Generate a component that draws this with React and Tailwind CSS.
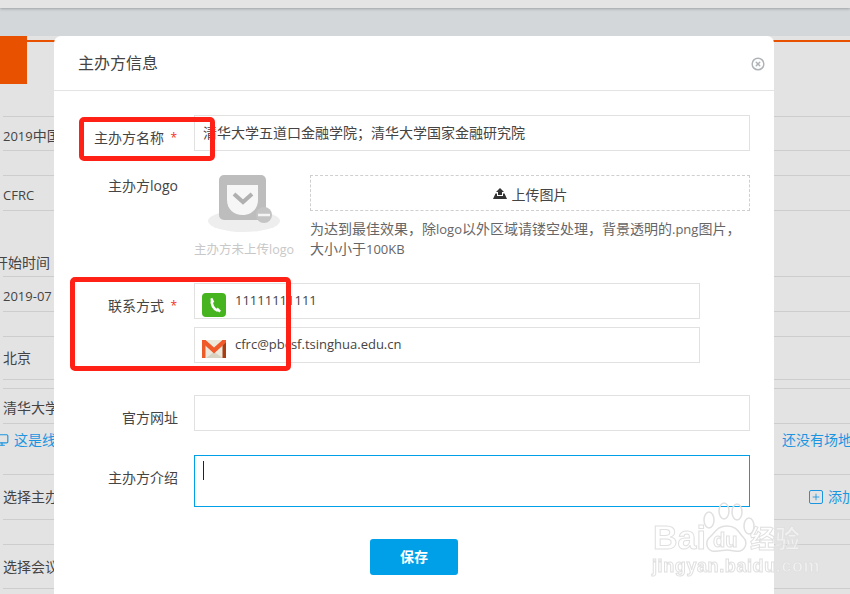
import { CircleX, Monitor, Plus } from 'lucide-react'

const FONT = "font-['Open_Sans','Noto_Sans_CJK_SC',sans-serif]"

function BgRow({ height, children, align = 'items-center' }) {
    return (
        <div className={`${height} ${align} flex justify-between border-b border-[#cdcdcd] box-border`}>
            {children}
        </div>
    )
}

function Latin({ children }) {
    return <span className="text-[13px]">{children}</span>
}

function Field({ label, required, children, className = '', labelTop = 'pt-[13px]' }) {
    return (
        <div className={`flex ${className}`}>
            <div className={`w-[124px] flex justify-end text-sm leading-[20px] text-[#444] shrink-0 ${labelTop}`}>
                <span>{label}</span>
                {required && <span className="w-[14px] text-right text-xs leading-[20px] pr-[1px] text-[#f5301e]">*</span>}
            </div>
            <div className="ml-[16px] flex-1 min-w-0">{children}</div>
        </div>
    )
}

function PhoneIcon() {
    return (
        <svg viewBox="0 0 24 24" className="w-[24px] h-[24px] shrink-0 mt-[8px]">
            <rect width="24" height="24" rx="4" fill="#45b41f" />
            <path d="M10 7.500C8.800 11 11.500 16.300 15.800 17.800" fill="none" stroke="#fff" strokeWidth="2.600" />
            <path d="M8.300 5.800 10.300 4.700 12.300 9 10 10.200z" fill="#fff" />
            <path d="M14.200 16.800 15.600 14.600 19 17.800 17.300 19.500z" fill="#fff" />
        </svg>
    )
}

function GmailIcon() {
    return (
        <svg viewBox="0 0 24 18" className="w-[24px] h-[18px] shrink-0 mt-[8px]">
            <rect width="24" height="18" fill="#ece9dc" />
            <path d="M12 12 21 18H4z" fill="#d6d3c3" />
            <path d="M0 0h3.500v18H0z" fill="#ea5d2a" />
            <path d="M20.500 0H24v18h-3.500z" fill="#a93c10" />
            <path d="M0 0h3.500L12 7.500 20.500 0H24v2.500L12 13.500 0 2.500z" fill="#f0592a" />
        </svg>
    )
}

function UploadIcon() {
    return (
        <svg viewBox="0 0 14 11" className="w-[14px] h-[11px] shrink-0" fill="#333">
            <path d="M7 0 11 4H9V7H5V4H3z" />
            <path d="M0 11 2.500 5.500H4V8H10V5.500H11.500L14 11z" />
        </svg>
    )
}

function LogoPlaceholder() {
    return (
        <svg viewBox="0 0 76 58" className="w-[76px] h-[58px]">
            <ellipse cx="38" cy="46" rx="36" ry="11" fill="#eeeeee" />
            <rect x="13" y="0" width="47" height="45" rx="5" fill="#bdbdbd" />
            <path d="M21 10h31v15c0 9-7 15-15.500 15S21 34 21 25z" fill="#f6f6f6" />
            <path d="M28 19l9 8 9-8" fill="none" stroke="#b0b0b0" strokeWidth="4" />
            <circle cx="58" cy="40" r="8" fill="#c4c4c4" />
            <path d="M52 40h12" stroke="#f4f4f4" strokeWidth="2.500" />
        </svg>
    )
}

function Watermark() {
    const text = "text-white/50 [-webkit-text-stroke:1px_#e0e0e0] font-bold"
    return (
        <div className="absolute left-[650px] top-[502px] w-[160px] h-[76px] pointer-events-none blur-[0.4px]">
            <svg viewBox="0 0 60 52" className="absolute left-[50px] top-0 w-[60px] h-[52px]" fill="none" stroke="#e0e0e0" strokeWidth="1.500">
                <ellipse cx="9" cy="18" rx="5" ry="8" />
                <ellipse cx="24" cy="9" rx="5" ry="8" />
                <ellipse cx="37" cy="10" rx="5" ry="8" />
                <ellipse cx="49" cy="24" rx="5" ry="8" />
                <path d="M12 49c-6-2-7-10-2-14 5-4 7-11 17-11s12 7 16 11c5 5 3 12-3 14-6 1-9-1-13-1s-9 2-15 1z" />
            </svg>
            <div className={`absolute left-[3px] top-[15px] text-[34px] leading-[40px] font-['Liberation_Sans',sans-serif] ${text}`}>
                Bai
            </div>
            <div className={`absolute left-[63px] top-[28px] text-[20px] leading-[20px] font-['Liberation_Sans',sans-serif] ${text}`}>
                du
            </div>
            <div className={`absolute left-[100px] top-[20px] text-[25px] leading-[30px] font-['Noto_Sans_CJK_SC',sans-serif] ${text}`}>
                经验
            </div>
            <div className={`absolute left-[2px] top-[54px] text-[18px] leading-[20px] font-['Liberation_Sans',sans-serif] tracking-[0.6px] ${text}`}>
                jingyan.baidu.com
            </div>
        </div>
    )
}

export default function App() {
    return (
        <div className={`relative w-[850px] h-[594px] overflow-hidden bg-[#e3e3e3] ${FONT}`}>
            {/* Page behind the overlay */}
            <div className="relative h-[8px] bg-[#e4e4e4] shadow-[0_1px_3px_rgba(0,0,0,0.25)]" />
            <div className="h-[28px] bg-[#d3d7da]" />
            <div className="flex items-start h-[48px]">
                <div className="w-[27px] h-[48px] bg-[#e75100]" />
                <div className="flex-1 h-[2px] mt-[4px] bg-[#e75100]" />
            </div>
            <div className="text-sm text-[#444] pl-[3px] pt-[32px]">
                <BgRow height="h-[35px] border-t"><span className="mt-[4px]"><Latin>2019</Latin>中国</span></BgRow>
                <div className="h-[25px] border-b border-[#cdcdcd]" />
                <BgRow height="h-[35px]"><span className="mt-[4px]"><Latin>CFRC</Latin></span></BgRow>
                <BgRow height="h-[66px]" align="items-end"><span className="-ml-[9px] pb-[3px]">开始时间</span></BgRow>
                <BgRow height="h-[35px]"><span className="mt-[4px]"><Latin>2019-07</Latin></span></BgRow>
                <div className="h-[25px] border-b border-[#cdcdcd]" />
                <BgRow height="h-[43px]"><span>北京</span></BgRow>
                <div className="h-[9px] border-b border-[#cdcdcd]" />
                <BgRow height="h-[35px]"><span className="mt-[4px]">清华大学</span></BgRow>
                <BgRow height="h-[51px]" align="items-start">
                    <span className="flex items-center gap-[5px] pt-[6px] -ml-[4px] text-[#1b95e0]">
                        <Monitor className="w-[14px] h-[14px] -ml-[4px]" />
                        这是线
                    </span>
                    <span className="pt-[6px] text-[#1b95e0] mr-[-2px]">还没有场地</span>
                </BgRow>
                <BgRow height="h-[45px]">
                    <span>选择主办</span>
                    <span className="flex items-center gap-[5px] text-[#1b95e0] mr-[-6px]">
                        <span className="w-[14px] h-[14px] border border-[#1b95e0] rounded-[2px] flex items-center justify-center">
                            <Plus className="w-[10px] h-[10px]" />
                        </span>
                        添加
                    </span>
                </BgRow>
                <div className="h-[25px] border-b border-[#cdcdcd]" />
                <BgRow height="h-[44px]"><span>选择会议</span></BgRow>
            </div>

            {/* Dialog */}
            <div className="absolute left-[54px] top-[36px] w-[720px] h-[558px] bg-white rounded-t-[7px]">
                <div className="h-[55px] border-b border-[#e3e3e3] flex items-center justify-between pl-[24px] pr-[9px]">
                    <span className="text-base text-[#444]">主办方信息</span>
                    <CircleX className="w-[14px] h-[14px] mt-[2px] text-[#aeb3b6]" strokeWidth={2.5} />
                </div>
                <div className="pt-[24px] pr-[24px]">
                    <Field label="主办方名称" required>
                        <div className="h-[36px] border border-[#e1e1e1] flex items-center px-[8px] text-sm text-[#444]">
                            清华大学五道口金融学院；清华大学国家金融研究院
                        </div>
                    </Field>
                    <Field label="主办方logo" className="mt-[24px]" labelTop="pt-[1px]">
                        <div className="flex">
                            <div className="w-[116px] shrink-0 flex flex-col items-start">
                                <div className="ml-[12px]"><LogoPlaceholder /></div>
                                <span className="mt-[8px] text-[12.500px] leading-[18px] text-[#c8c8c8] whitespace-nowrap">主办方未上传logo</span>
                            </div>
                            <div className="flex-1 min-w-0">
                                <div className="h-[36px] border border-dashed border-[#cfcfcf] flex items-center justify-center gap-[5px] text-sm text-[#444]">
                                    <UploadIcon />
                                    <span className="mt-[3px]">上传图片</span>
                                </div>
                                <p className="mt-[8px] text-sm leading-[20px] text-[#666]">
                                    为达到最佳效果，除<Latin>logo</Latin>以外区域请镂空处理，背景透明的<Latin>.png</Latin>图片，大小小于<Latin>100KB</Latin>
                                </p>
                            </div>
                        </div>
                    </Field>
                    <Field label="联系方式" required className="mt-[24px]">
                        <div className="w-[506px] flex flex-col gap-[8px]">
                            <div className="h-[36px] border border-[#e1e1e1] flex items-center pl-[7px] gap-[9px] text-[13px] text-[#444]">
                                <PhoneIcon />
                                <span>11111111111</span>
                            </div>
                            <div className="h-[36px] border border-[#e1e1e1] flex items-center pl-[7px] gap-[9px] text-[13px] text-[#444]">
                                <GmailIcon />
                                <span>cfrc@pbcsf.tsinghua.edu.cn</span>
                            </div>
                        </div>
                    </Field>
                    <Field label="官方网址" className="mt-[32px]">
                        <div className="h-[36px] border border-[#e1e1e1]" />
                    </Field>
                    <Field label="主办方介绍" className="mt-[24px]">
                        <div className="h-[52px] border border-[#00a0e9] pl-[8px] pt-[5px]">
                            <div className="w-[1px] h-[19px] bg-[#222]" />
                        </div>
                    </Field>
                    <div className="flex justify-center mt-[32px] pl-[24px]">
                        <button className="w-[88px] h-[36px] rounded-[3px] bg-[#00a0e9] text-white text-sm font-bold">保存</button>
                    </div>
                </div>
            </div>

            <Watermark />

            {/* Red annotation boxes */}
            <div className="absolute left-[79px] top-[117px] w-[136px] h-[44px] border-[5px] border-[#ff2116] rounded-[5px]" />
            <div className="absolute left-[70px] top-[277px] w-[221px] h-[94px] border-[5px] border-[#ff2116] rounded-[5px]" />
        </div>
    )
}
